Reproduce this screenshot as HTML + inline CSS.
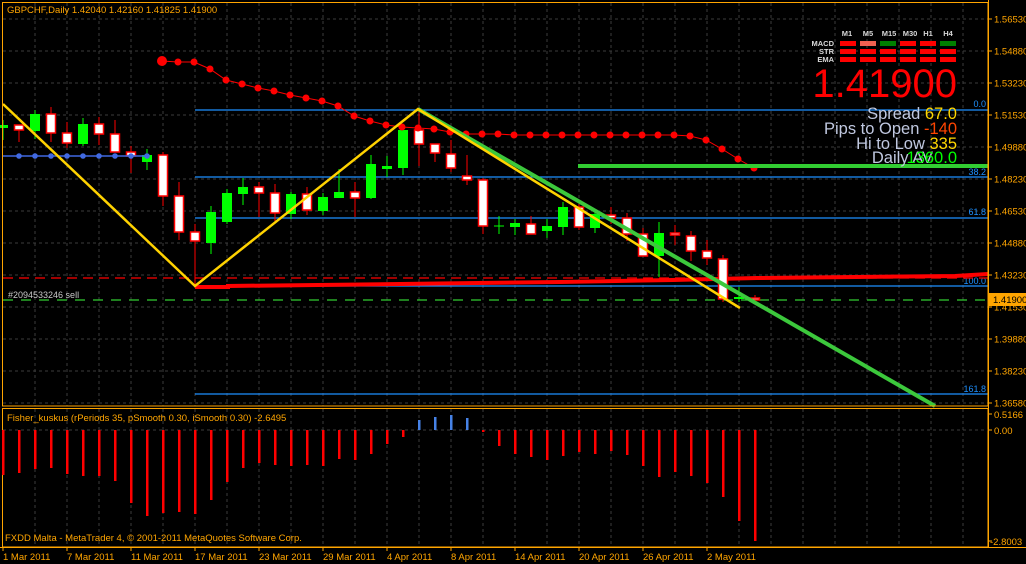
<!DOCTYPE html>
<html><head><meta charset="utf-8"><style>
html,body{margin:0;padding:0;background:#000;width:1026px;height:564px;overflow:hidden}
svg{display:block}
text{font-family:"Liberation Sans",sans-serif}
</style></head><body>
<svg id="s" width="1026" height="564" viewBox="0 0 1026 564" xmlns="http://www.w3.org/2000/svg">
<g id="grid" stroke="#3c3c3c" stroke-width="1" stroke-dasharray="3,3"></g>
<!-- fibo lines -->
<g stroke="#1e90ff" stroke-width="1.2">
<line x1="195" y1="110" x2="988" y2="110"/>
<line x1="195" y1="177" x2="988" y2="177"/>
<line x1="195" y1="218" x2="988" y2="218"/>
<line x1="195" y1="286" x2="988" y2="286"/>
<line x1="195" y1="394" x2="988" y2="394"/>
</g>
<g fill="#1e90ff" font-size="9" text-anchor="end">
<text x="986" y="107">0.0</text>
<text x="986" y="175">38.2</text>
<text x="986" y="215">61.8</text>
<text x="986" y="284">100.0</text>
<text x="986" y="392">161.8</text>
</g>
<!-- dashed red & green -->
<line x1="3" y1="278" x2="988" y2="278" stroke="#ff0000" stroke-width="1.3" stroke-dasharray="10,6"/>
<line x1="3" y1="300" x2="988" y2="300" stroke="#32cd32" stroke-width="1.3" stroke-dasharray="10,8"/>
<text x="8" y="298" fill="#c8c8c8" font-size="9">#2094533246 sell</text>
<!-- red thick -->
<polyline points="195,287 228,287 228,286 400,284 478,283 560,282 673,280 757,278 955,276 988,274" fill="none" stroke="#ff0000" stroke-width="4"/>
<g id="candles"></g>
<!-- blue dotted -->
<line x1="3" y1="156" x2="147" y2="156" stroke="#4169e1" stroke-width="1.5"/>
<g id="bdots" fill="#4169e1"></g>
<!-- red dots -->
<g id="rdots"></g>
<!-- green lines -->
<line x1="578" y1="166" x2="988" y2="166" stroke="#32cd32" stroke-width="4"/>
<line x1="418" y1="109" x2="935" y2="406" stroke="#3cc83c" stroke-width="4"/>
<polyline points="3,104 195,286 418,109 740,308" fill="none" stroke="#ffd200" stroke-width="2.5"/>
<!-- frames -->
<rect x="2.5" y="2.5" width="985.5" height="403.5" fill="none" stroke="#ffa500" stroke-width="1"/>
<rect x="2.5" y="408.5" width="985.5" height="138.5" fill="none" stroke="#ffa500" stroke-width="1"/>
<line x1="0" y1="547.5" x2="1026" y2="547.5" stroke="#ffa500"/>
<text x="7" y="13" fill="#ffa500" font-size="9.5">GBPCHF,Daily  1.42040 1.42160 1.41825 1.41900</text>
<!-- right axis -->
<g id="axis" fill="#ffa500" font-size="9.5"></g>
<rect x="989" y="293" width="37" height="13" fill="#ffa500"/>
<text x="993" y="303" fill="#000" font-size="9.5">1.41900</text>
<!-- indicator -->
<line x1="3" y1="430" x2="988" y2="430" stroke="#3c3c3c" stroke-dasharray="3,3"/>
<g id="ind"></g>
<text x="7" y="421" fill="#ffa500" font-size="9.5">Fisher_kuskus  (rPeriods 35, pSmooth 0.30, iSmooth 0.30)   -2.6495</text>
<text x="5" y="541" fill="#ffa500" font-size="9.5">FXDD Malta - MetaTrader 4, © 2001-2011 MetaQuotes Software Corp.</text>
<g id="dates" fill="#ffa500" font-size="9.5"></g>
<!-- top right panel -->
<g fill="#d8d8d8" font-size="7.5" font-weight="bold" text-anchor="middle">
<text x="847" y="36">M1</text><text x="868" y="36">M5</text><text x="889" y="36">M15</text>
<text x="910" y="36">M30</text><text x="928" y="36">H1</text><text x="948" y="36">H4</text>
</g>
<g fill="#d8d8d8" font-size="7.5" font-weight="bold" text-anchor="end">
<text x="834" y="46">MACD</text><text x="834" y="54">STR</text><text x="834" y="62">EMA</text>
</g>
<g id="boxes"></g>
<text x="957" y="97" fill="#ff0000" font-size="40" text-anchor="end">1.41900</text>
<g font-size="16.5" text-anchor="end">
<text x="957" y="119"><tspan fill="#c0c8e0">Spread </tspan><tspan fill="#ffd700">67.0</tspan></text>
<text x="957" y="134"><tspan fill="#c0c8e0">Pips to Open </tspan><tspan fill="#ff4500">-140</tspan></text>
<text x="957" y="149"><tspan fill="#c0c8e0">Hi to Low </tspan><tspan fill="#ffd700">335</tspan></text>
<text x="933" y="163" fill="#c0c8e0">Daily AV</text>
<text x="957" y="163" fill="#00ff00">1360.0</text>
</g>
</svg>
<script>
var NS="http://www.w3.org/2000/svg";
function el(p,t,a){var e=document.createElementNS(NS,t);for(var k in a)e.setAttribute(k,a[k]);document.getElementById(p).appendChild(e);return e;}
for(var x=35;x<988;x+=32){el("grid","line",{x1:x,y1:3,x2:x,y2:406});el("grid","line",{x1:x,y1:409,x2:x,y2:547});}
for(var y=19;y<406;y+=32)el("grid","line",{x1:3,y1:y,x2:988,y2:y});
var C=[[3,'g',125,128,120,140],[19,'w',125,130,125,142],[35,'g',114,131,110,139],[51,'w',114,133,107,142],[67,'w',133,143,122,148],[83,'g',124,144,118,146],[99,'w',124,134,117,145],[115,'w',134,152,120,152],[131,'w',152,156,146,173],[147,'g',155,162,149,170],[163,'w',155,196,152,206],[179,'w',196,232,182,240],[195,'w',232,241,224,285],[211,'g',212,243,206,254],[227,'g',193,222,189,224],[243,'g',187,194,178,205],[259,'w',187,193,182,217],[275,'w',193,213,184,221],[291,'g',194,214,192,219],[307,'w',194,210,187,215],[323,'g',197,211,193,215],[339,'g',192,198,169,198],[355,'w',192,198,182,217],[371,'g',164,198,155,199],[387,'g',166,169,156,177],[403,'g',130,168,127,175],[419,'w',130,144,108,166],[435,'w',144,153,144,162],[451,'w',154,168,140,172],[467,'w',176,180,155,185],[483,'w',180,226,178,234],[499,'g',225.5,226.5,216,234],[515,'g',223,227,219,235],[531,'w',224,234,216,234],[547,'g',226,231,219,238],[563,'g',207,227,202,235],[579,'w',207,227,204,230],[595,'g',214,228,211,233],[611,'w',215,218,207,224],[627,'w',218,234,213,241],[643,'w',234,256,228,256],[659,'g',233,256,222,277],[675,'w',233,235,225,245],[691,'w',236,251,231,261],[707,'w',251,258,240,265],[723,'w',259,299,255,302],[739,'g',297,299,287,302],[755,'w',298,300,295,302]];
C.forEach(function(c){var x=c[0],g=c[1]=='g',col=g?'#00ff00':'#ff0000';
el("candles","line",{x1:x,y1:c[4],x2:x,y2:c[5],stroke:col,"stroke-width":1});
if(g)el("candles","rect",{x:x-5,y:c[2],width:10,height:Math.max(1,c[3]-c[2]),fill:'#00ff00'});
else el("candles","rect",{x:x-4.5,y:c[2],width:9,height:Math.max(1,c[3]-c[2]),fill:'#fff',stroke:'#ff0000','stroke-width':1.5});});
for(var x=19;x<=147;x+=16)el("bdots","circle",{cx:x,cy:156,r:2.8});
var R=[[162,61],[178,62],[194,62],[210,69],[226,80],[242,84],[258,88],[274,91],[290,95],[306,98],[322,101],[338,106],[354,116],[370,121],[386,125],[402,127],[418,128],[434,129],[450,132],[466,134],[482,134],[498,134]];
for(var x=514;x<=674;x+=16)R.push([x,135]);R.push([690,136],[706,140],[722,149],[738,159],[754,168]);
el("rdots","polyline",{points:R.map(function(p){return p.join(',')}).join(' '),fill:'none',stroke:'#ff0000','stroke-width':1});
R.forEach(function(p,i){el("rdots","circle",{cx:p[0],cy:p[1],r:i==0?5:3.5,fill:'#ff0000'});});
var I=[[3,475],[19,473],[35,469],[51,468],[67,474],[83,476],[99,476],[115,481],[131,503],[147,516],[163,513],[179,512],[195,514],[211,500],[227,482],[243,468],[259,463],[275,465],[291,466],[307,465],[323,466],[339,459],[355,460],[371,454],[387,444],[403,437],[483,432],[499,446],[515,454],[531,457],[547,460],[563,456],[579,452],[595,454],[611,451],[627,455],[643,466],[659,477],[675,472],[691,476],[707,483],[723,497],[739,521],[755,541]];
I.forEach(function(p){el("ind","rect",{x:p[0]-1,y:430,width:2.5,height:p[1]-430,fill:'#ff0000'});});
[[419,420],[435,417],[451,415],[467,418]].forEach(function(p){el("ind","rect",{x:p[0]-1,y:p[1],width:2.5,height:430-p[1],fill:'#4682e6'});});
var P=["1.56530","1.54880","1.53230","1.51530","1.49880","1.48230","1.46530","1.44880","1.43230","1.41530","1.39880","1.38230","1.36580"];
P.forEach(function(t,i){var y=19+32*i;el("axis","line",{x1:988,y1:y,x2:992,y2:y,stroke:'#ffa500'});var e=el("axis","text",{x:994,y:y+3.5});e.textContent=t;});
el("axis","line",{x1:988,y1:414,x2:992,y2:414,stroke:'#ffa500'});var e=el("axis","text",{x:994,y:418});e.textContent="0.5166";
el("axis","line",{x1:988,y1:430,x2:992,y2:430,stroke:'#ffa500'});e=el("axis","text",{x:994,y:434});e.textContent="0.00";
el("axis","line",{x1:988,y1:541,x2:992,y2:541,stroke:'#ffa500'});e=el("axis","text",{x:990,y:545});e.textContent="-2.8003";
el("axis","line",{x1:988.5,y1:0,x2:988.5,y2:548,stroke:'#ffa500'});
var D=["1 Mar 2011","7 Mar 2011","11 Mar 2011","17 Mar 2011","23 Mar 2011","29 Mar 2011","4 Apr 2011","8 Apr 2011","14 Apr 2011","20 Apr 2011","26 Apr 2011","2 May 2011"];
D.forEach(function(t,i){var x=3+64*i;el("dates","line",{x1:x,y1:547,x2:x,y2:551,stroke:'#ffa500'});var e=el("dates","text",{x:x,y:560});e.textContent=t;});
var BX=[840,860,880,900,920,940],row1=['#ff0000','#f06050','#008000','#ff0000','#ff0000','#008000'];
BX.forEach(function(x,i){el("boxes","rect",{x:x,y:41,width:16,height:5,fill:row1[i]});el("boxes","rect",{x:x,y:49,width:16,height:5,fill:'#ff0000'});el("boxes","rect",{x:x,y:57,width:16,height:5,fill:'#ff0000'});});
</script>
</body></html>
